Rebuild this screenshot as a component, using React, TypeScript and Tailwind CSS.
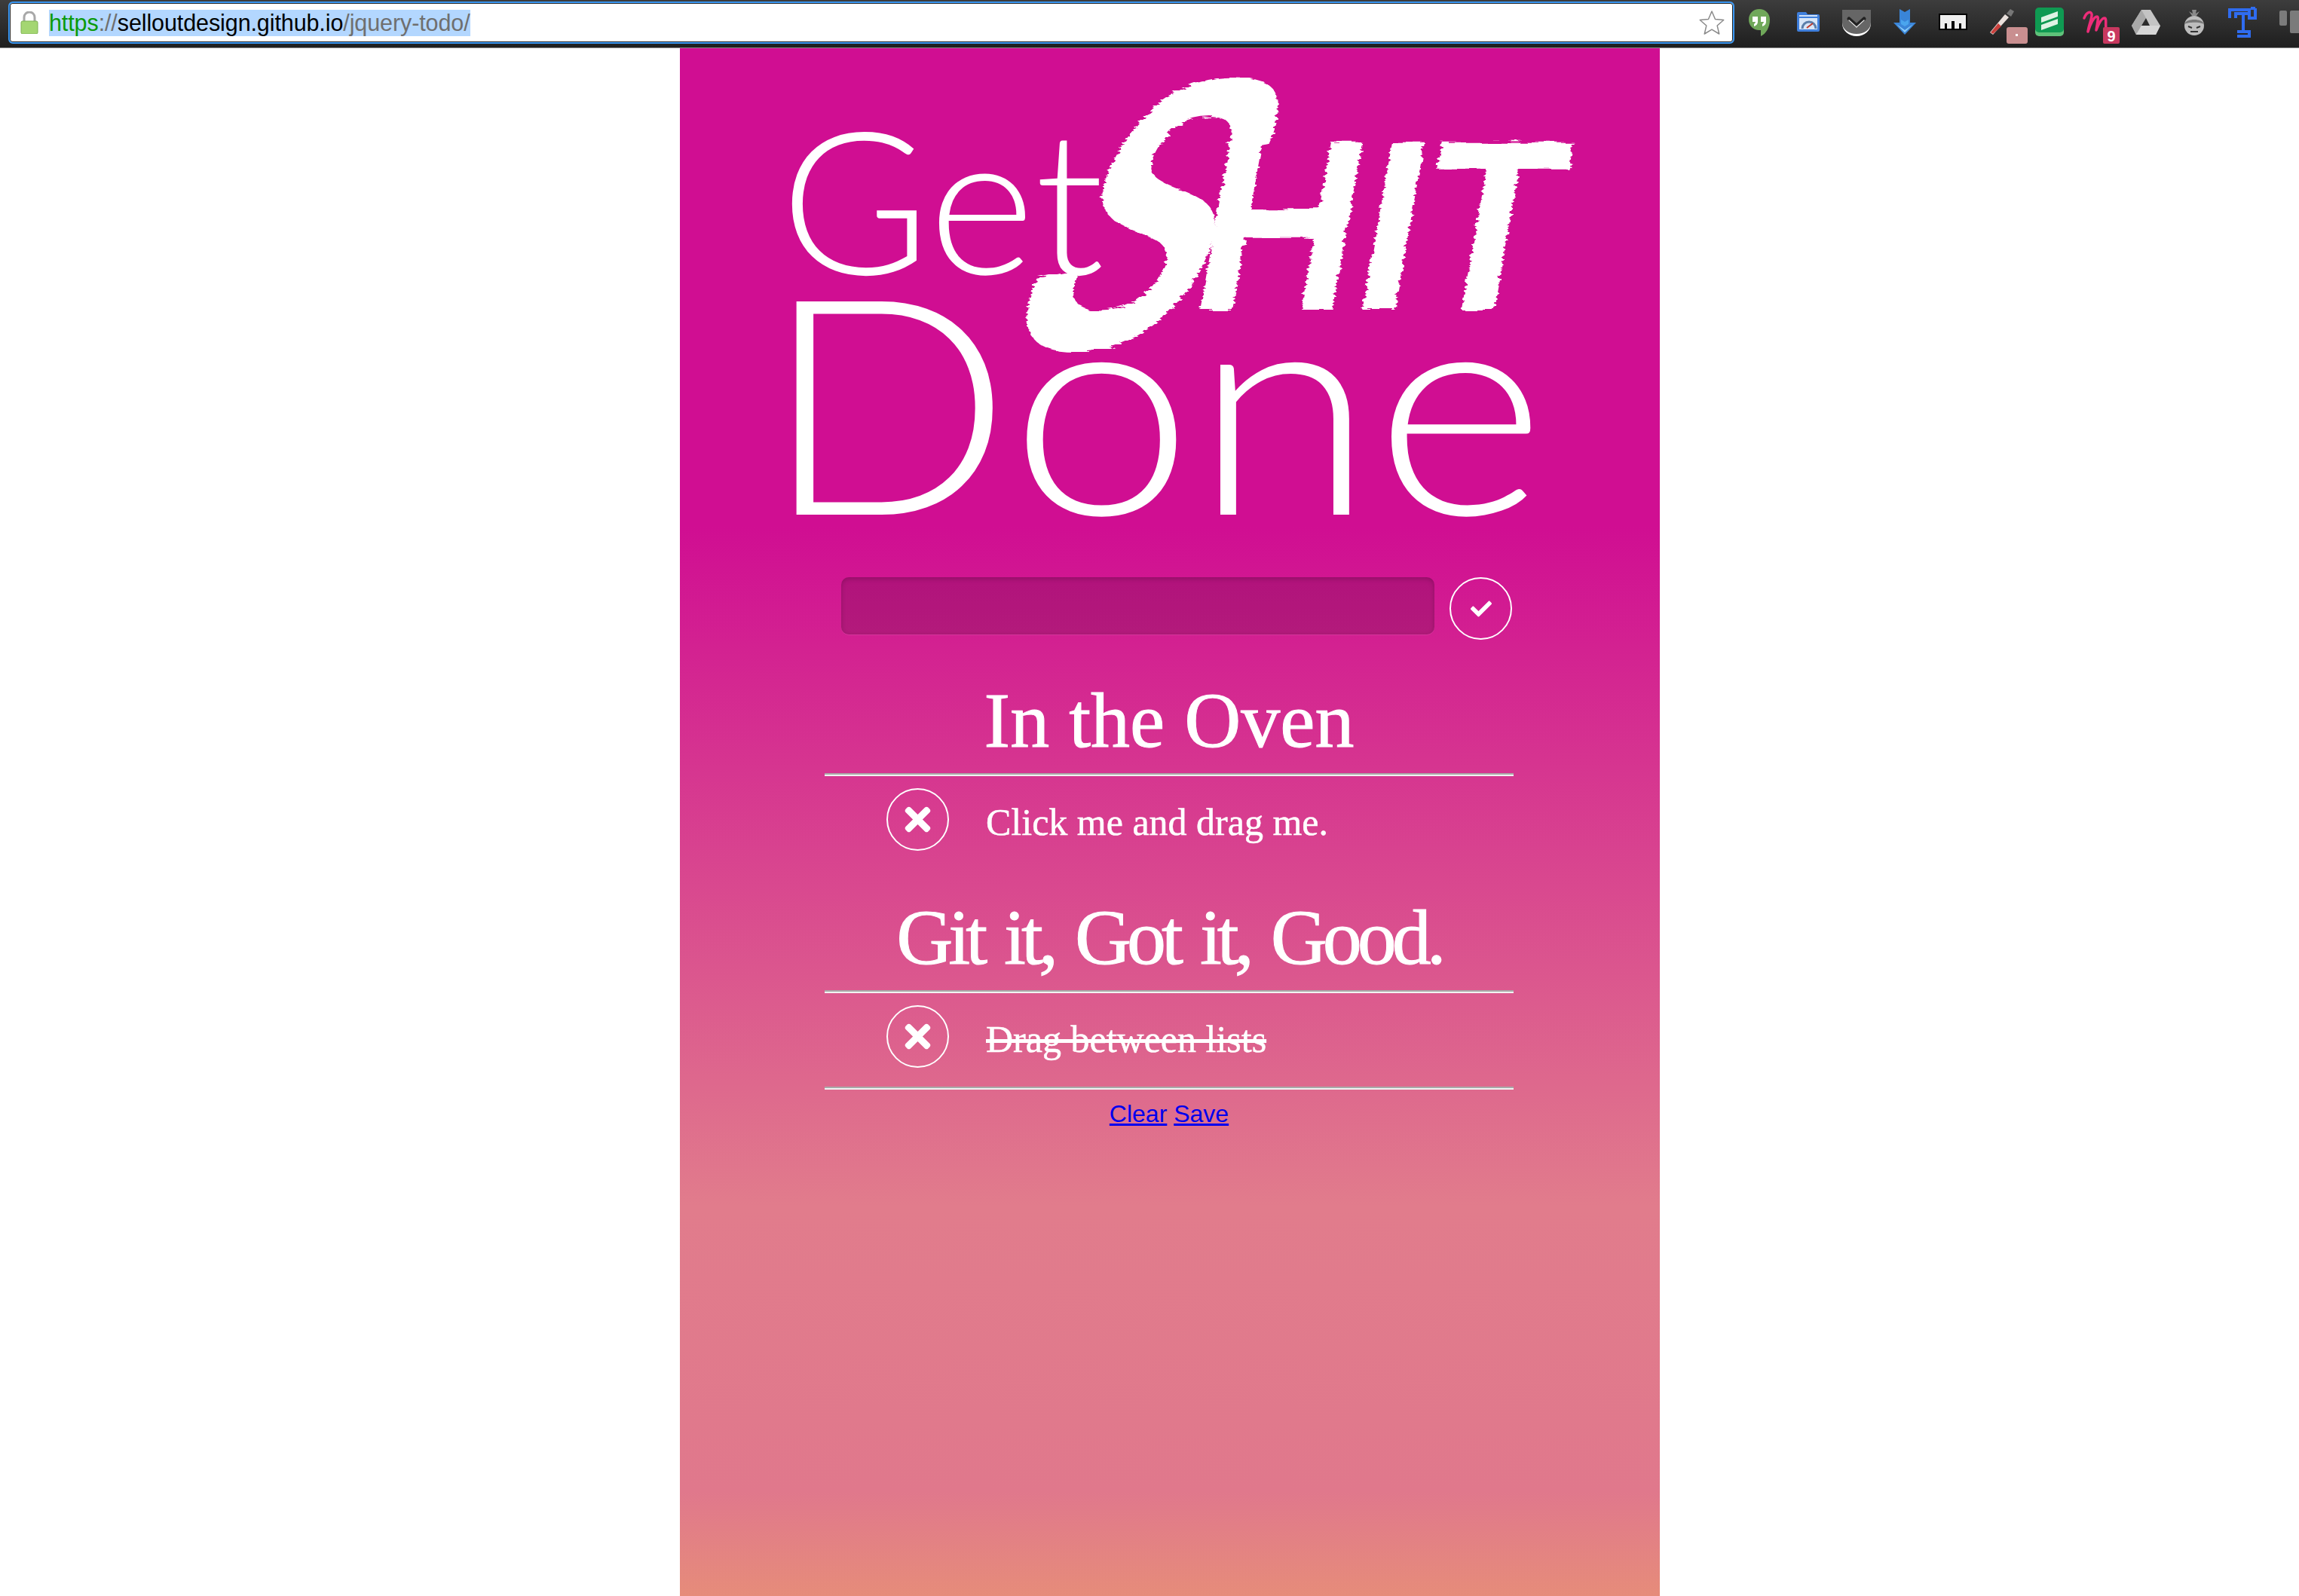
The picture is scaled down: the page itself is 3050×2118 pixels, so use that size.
import { FaCheck, FaTimes } from "react-icons/fa";

const slabFont = "font-['Liberation_Serif',serif]";

function Hangouts() {
  return (
    <>
      <path d="M32 12c-8 0-14 6-14 14s6 14 14 14h2v8c7-3 12-12 12-22 0-8-6-14-14-14z" fill="#70a85a" />
      <path d="M23 22h7v7c0 3-2 5-5 6v-3c1-1 2-2 2-3h-4zM34 22h7v7c0 3-2 5-5 6v-3c1-1 2-2 2-3h-4z" fill="#fff" />
    </>
  );
}

function PageSpeed() {
  return (
    <>
      <path d="M18 18a2 2 0 0 1 2-2h10l2 3h14a2 2 0 0 1 2 2v19a2 2 0 0 1-2 2H20a2 2 0 0 1-2-2z" fill="#3f7fdc" />
      <rect x="21" y="24" width="24" height="15" fill="#d8e6f7" />
      <rect x="21" y="20" width="24" height="2" fill="#cfe0f7" />
      <path d="M25 38a9 9 0 0 1 18 0" fill="none" stroke="#5c7faa" strokeWidth="3" />
      <path d="M31 37l8-6" stroke="#c0392b" strokeWidth="2" />
    </>
  );
}

function Pocket() {
  return (
    <>
      <path d="M14 14h38v17c0 10-9 17-19 17s-19-7-19-17z" fill="#fff" />
      <path d="M14 13h38v17c0 9-9 15-19 15s-19-6-19-15z" fill="#666" />
      <path d="M23 25l10 9 10-9" fill="none" stroke="#222" strokeWidth="5" strokeLinecap="round" strokeLinejoin="round" />
      <path d="M23 27l10 9 10-9" fill="none" stroke="#ddd" strokeWidth="1.5" strokeLinecap="round" />
    </>
  );
}

function DownArrow() {
  return (
    <>
      <path d="M26 12l7 4 7-4v18h8L33 46 18 30h8z" fill="#3a85d8" />
      <path d="M28 26l5 3 5-3v6l-5 3-5-3z" fill="#4aa5ee" />
      <path d="M22 32l11 11 11-11-11 8z" fill="#8ed0fb" />
    </>
  );
}

function Ruler() {
  return (
    <>
      <rect x="14" y="18" width="38" height="22" fill="#000" />
      <path d="M16 20h34v18h-6v-7h-3v7h-6v-10h-4v10h-6v-7h-3v7h-6z" fill="#eee" />
    </>
  );
}

function Dropper() {
  return (
    <>
      <path d="M18 43l20-24 5 4-21 23z" fill="#e9e0dc" />
      <path d="M19 43l10-12 4 4-11 10z" fill="#c9403c" />
      <path d="M40 18l5-6 5 3-4 7z" fill="#777" />
      <rect x="40" y="36" width="28" height="22" rx="3" fill="#c98f90" />
      <rect x="52" y="45" width="3" height="3" fill="#fff" />
    </>
  );
}

function GreenNotes() {
  return (
    <>
      <rect x="14" y="14" width="38" height="34" rx="5" fill="#5fc27a" />
      <rect x="14" y="10" width="38" height="33" rx="5" fill="#0f9a52" />
      <path d="M22 23l22-8v7l-22 8zM22 33l22-8v7l-22 8z" fill="#dff3e4" />
    </>
  );
}

function MailBadge() {
  return (
    <>
      <path
        d="M15 24c3-8 9-10 10-5 1 4-4 14-5 23 3-10 8-20 12-20 3 0 0 10-1 18 3-8 7-16 11-16 3 0 1 8 2 14"
        fill="none"
        stroke="#ee2c79"
        strokeWidth="3.5"
        strokeLinecap="round"
        strokeLinejoin="round"
      />
      <rect x="40" y="36" width="22" height="22" rx="2" fill="#c8385f" />
      <text x="51" y="55" textAnchor="middle" fontSize="20" fontWeight="700" fontFamily="Liberation Sans" fill="#fff">
        9
      </text>
    </>
  );
}

function Drive() {
  return (
    <>
      <path d="M27 13h12l13 21-6 12H20l-6-12z" fill="#c4c4c4" />
      <path d="M27 13l-13 21 6 12 13-22z" fill="#a8a8a8" />
      <path d="M20 46h26l6-12H27z" fill="#d6d6d6" />
      <path d="M33 24l5 10H27z" fill="#2c2c2c" />
    </>
  );
}

function Sumo() {
  return (
    <>
      <path d="M30 13h6l-1 5 5-3-4 6h-6l-4-6 5 3z" fill="#8a8a8a" />
      <circle cx="33" cy="34" r="13" fill="#bdbdbd" />
      <path d="M20 32c2-8 24-8 26 0-5-3-21-3-26 0z" fill="#777" />
      <path d="M25 35l5 2M41 35l-5 2M28 42h10" stroke="#333" strokeWidth="2" />
    </>
  );
}

function TBlock() {
  return (
    <path
      d="M16 24v-11h26v5h-18v6M50 11v13h-8v-6h-8v24h-8M50 11h-6M34 42h8v6h-16"
      fill="none"
      stroke="#2f6cf0"
      strokeWidth="4"
    />
  );
}

function Cutoff() {
  return (
    <>
      <rect x="18" y="14" width="10" height="20" rx="2" fill="#7b7b7b" />
      <rect x="32" y="14" width="26" height="30" rx="2" fill="#7b7b7b" />
    </>
  );
}

const toolbarIcons = [
  Hangouts,
  PageSpeed,
  Pocket,
  DownArrow,
  Ruler,
  Dropper,
  GreenNotes,
  MailBadge,
  Drive,
  Sumo,
  TBlock,
  Cutoff,
];

function Toolbar() {
  return (
    <div className="flex h-[64px] items-start overflow-hidden border-b border-[#8a8a8a] bg-gradient-to-b from-[#3d3d3d] to-[#1f1f1f]">
      <div className="mt-[2px] ml-[11px] flex h-[56px] w-[2290px] shrink-0 items-center rounded-[6px] border-2 border-[#3b99f5] bg-white pl-[14px] shadow-[inset_0_0_0_1px_#222]">
        <svg viewBox="0 0 24 30" className="h-[30px] w-[24px] shrink-0">
          <path d="M5 14V8a7 7 0 0 1 14 0v6" fill="none" stroke="#a8a8a8" strokeWidth="3" />
          <rect x="1" y="13" width="22" height="17" rx="2" fill="#a4d672" stroke="#7fb255" />
        </svg>
        <span className="ml-[14px] bg-[#b3d7ff] font-['Liberation_Sans',sans-serif] text-[30.5px] leading-[35px] tracking-[-0.1px] text-[#6f6f6f]">
          <span className="text-[#0a9a0a]">https</span>
          ://
          <span className="text-black">selloutdesign.github.io</span>
          /jquery-todo/
        </span>
        <svg viewBox="0 0 24 24" className="mr-[10px] ml-auto h-[36px] w-[36px]" fill="#fff" stroke="#8a8a8a" strokeWidth="1">
          <path d="M12 2l3 7 7.500 .7-5.700 5 1.700 7.300-6.500-3.900-6.500 3.900 1.700-7.300-5.700-5 7.500-.7z" strokeLinejoin="round" />
        </svg>
      </div>
      <div className="ml-[1px] flex">
        {toolbarIcons.map((Icon, i) => (
          <svg key={i} viewBox="0 0 64 64" className="h-[64px] w-[64px] shrink-0 overflow-visible">
            <Icon />
          </svg>
        ))}
      </div>
    </div>
  );
}

function Logo() {
  return (
    <svg viewBox="0 0 1300 640" className="block h-[640px] w-[1300px] overflow-visible" fill="#fff" aria-label="Get Shit Done">
      <defs>
        <filter id="brush" x="-5%" y="-5%" width="110%" height="110%">
          <feTurbulence type="fractalNoise" baseFrequency="0.03 0.25" numOctaves="2" seed="4" />
          <feDisplacementMap in="SourceGraphic" scale="10" />
        </filter>
      </defs>
      <text x="133" y="300" fontFamily="Lato" fontWeight="300" fontSize="264" textLength="430" lengthAdjust="spacingAndGlyphs">
        Get
      </text>
      <text x="109" y="619" fontFamily="Lato" fontWeight="300" fontSize="400" textLength="1040" lengthAdjust="spacingAndGlyphs">
        Done
      </text>
      <g filter="url(#brush)">
        <text
          transform="translate(410 398) skewX(-30) scale(0.68 1)"
          fontFamily="Liberation Sans"
          fontWeight="700"
          fontSize="515"
        >
          S
        </text>
        <text
          x="685"
          y="347"
          fontFamily="Liberation Sans"
          fontWeight="700"
          fontStyle="italic"
          fontSize="323"
          textLength="480"
          lengthAdjust="spacingAndGlyphs"
        >
          HIT
        </text>
      </g>
    </svg>
  );
}

function RoundButton({ children }: { children: React.ReactNode }) {
  return (
    <button className="flex h-[83px] w-[83px] shrink-0 items-center justify-center rounded-full border-2 border-white text-white">
      {children}
    </button>
  );
}

function Rule() {
  return <div className="h-[4px] border-t-2 border-b-2 border-t-[#a9a9a9] border-b-[#f2f2f2]" />;
}

function Heading({ text, tracking }: { text: string; tracking: string }) {
  return (
    <h2
      className={`${slabFont} ${tracking} h-[160px] pt-[35px] text-center text-[104px] leading-[110px] text-white [-webkit-text-stroke:1px_white]`}
    >
      {text}
    </h2>
  );
}

function TodoItem({ text, done }: { text: string; done?: boolean }) {
  return (
    <div className="flex items-start gap-[49px] pt-[16px] pb-[25px] pl-[82px]">
      <RoundButton>
        <FaTimes size={49} />
      </RoundButton>
      <span
        className={`${slabFont} pt-[17px] text-[50px] leading-[57px] text-white [-webkit-text-stroke:0.5px_white] ${done ? "line-through" : ""}`}
      >
        {text}
      </span>
    </div>
  );
}

export default function App() {
  return (
    <div className="min-h-[2118px] bg-white">
      <Toolbar />
      <main className="ml-[902px] h-[2054px] w-[1300px] bg-[linear-gradient(to_bottom,#d00e92_0px,#d00e92_636px,#e17c8c_1536px,#e0788c_1916px,#e68c7a_2054px)]">
        <Logo />
        <div className="ml-[192px] w-[914px] pt-[62px]">
          <div className="flex items-start gap-[20px] pl-[22px]">
            <input
              type="text"
              className="h-[76px] w-[787px] rounded-[10px] bg-black/15 shadow-[inset_0_2px_6px_rgba(0,0,0,0.2),0_1px_0_rgba(255,255,255,0.1)] outline-none"
            />
            <RoundButton>
              <FaCheck size={28} />
            </RoundButton>
          </div>
          <div className="mt-[17px]">
            <Heading text="In the Oven" tracking="tracking-normal" />
          </div>
          <Rule />
          <TodoItem text="Click me and drag me." />
          <Heading text="Git it, Got it, Good." tracking="tracking-[-6px] [word-spacing:8px]" />
          <Rule />
          <TodoItem text="Drag between lists" done />
          <Rule />
          <div className="mt-[14px] text-center font-['Liberation_Sans',sans-serif] text-[32px] leading-[36px] text-[#0000ee]">
            <a href="#" className="underline">
              Clear
            </a>{" "}
            <a href="#" className="underline">
              Save
            </a>
          </div>
        </div>
      </main>
    </div>
  );
}
